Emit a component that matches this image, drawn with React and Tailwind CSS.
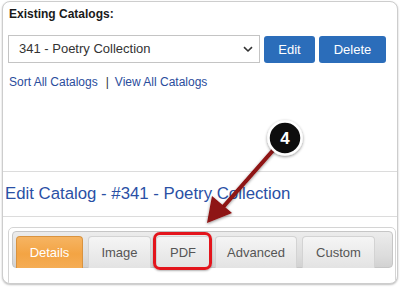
import React from "react";

function Tab({ label, w, active }) {
  return (
    <div
      className={
        "h-[32px] mb-[-1px] flex items-center justify-center rounded-t-[4px] border border-b-0 text-[13px] " +
        (active
          ? "bg-[linear-gradient(#f6b462,#f3a444_55%,#f5ad55)] border-[#d9933f] text-white"
          : "bg-[linear-gradient(#f5f5f5,#ebebeb_55%,#e3e3e3)] border-[#d3d3d3] text-[#555555]")
      }
      style={{ width: w }}
    >
      {label}
    </div>
  );
}

export default function App() {
  return (
    <div
      className="relative w-[401px] h-[287px] bg-white overflow-hidden"
      style={{ fontFamily: '"Liberation Sans", Arial, sans-serif' }}
    >
      <div className="pl-[2px] pt-[1px]">
        <div className="w-[396px] h-[283px] border border-[#cdcdcd] rounded-[8px] overflow-hidden bg-white shadow-[0_1px_2px_rgba(0,0,0,0.25)]">
          <div className="px-[5px] pt-[5px]">
            <div className="ml-[1px] text-[12px] leading-[15px] font-bold text-[#1a1a1a]">
              Existing Catalogs:
            </div>
            <div className="mt-[13px] flex items-start gap-[4px]">
              <div className="w-[252px] h-[28px] border border-[#c4c4c4] bg-white flex items-center justify-between pl-[10px] pr-[6px] text-[13px] text-[#333333]">
                <span>341 - Poetry Collection</span>
                <svg width="10" height="7" viewBox="0 0 10 7">
                  <path d="M1 1.2 L5 5 L9 1.2" fill="none" stroke="#333" strokeWidth="1.6" />
                </svg>
              </div>
              <div className="mt-[1px] w-[51px] h-[27px] rounded-[3px] bg-[#2b6dba] text-white text-[13px] flex items-center justify-center">
                Edit
              </div>
              <div className="mt-[1px] w-[67px] h-[27px] rounded-[3px] bg-[#2b6dba] text-white text-[13px] flex items-center justify-center">
                Delete
              </div>
            </div>
            <div className="mt-[12px] ml-[1px] text-[12px] leading-[14px] text-[#2a4c9c] flex">
              <span>Sort All Catalogs</span>
              <span className="ml-[8px] mr-[6px] text-[#333333]">|</span>
              <span>View All Catalogs</span>
            </div>
          </div>
          <div className="mt-[82px] h-px bg-[#dcdcdc]" />
          <div className="mt-[12px] ml-[2px] text-[16.8px] leading-[19px] text-[#2a50a5]">
            Edit Catalog - #341 - Poetry Collection
          </div>
          <div className="mt-[13px] h-px bg-[#dcdcdc]" />
          <div className="mt-[10px] ml-[5px] w-[388px] h-[70px] border border-[#d4d4d4] rounded-[5px] pt-[3px] pl-[3px] pr-[2px]">
            <div className="h-[37px] border border-[#c6c6c6] rounded-[4px] bg-[linear-gradient(#ececec,#dcdcdc_70%,#d2d2d2)] pl-[3px] flex items-end gap-[5px]">
              <Tab label="Details" w={67} active />
              <Tab label="Image" w={63} />
              <Tab label="PDF" w={54} />
              <Tab label="Advanced" w={82} />
              <Tab label="Custom" w={73} />
            </div>
          </div>
        </div>
      </div>

      <div className="absolute left-[153px] top-[232px] w-[59px] h-[38px] border-[3px] border-[#e3151c] rounded-[7px] shadow-[0_1px_2px_rgba(0,0,0,0.3)]" />

      <svg className="absolute left-0 top-0 pointer-events-none" width="401" height="287" viewBox="0 0 401 287">
        <defs>
          <filter id="sh" x="-50%" y="-50%" width="200%" height="200%">
            <feDropShadow dx="0" dy="1" stdDeviation="1.5" floodColor="#000" floodOpacity="0.45" />
          </filter>
        </defs>
        <g filter="url(#sh)">
          <line x1="276" y1="147" x2="224" y2="206" stroke="#8e1212" strokeWidth="4" strokeLinecap="round" />
          <polygon points="207,223 232,213 212,196" fill="#8e1212" />
        </g>
        <g filter="url(#sh)">
          <circle cx="285" cy="138" r="16.5" fill="#111" stroke="#fff" strokeWidth="2.5" />
        </g>
        <text x="285" y="144" textAnchor="middle" fill="#fff" fontSize="17" fontWeight="bold" fontFamily="Liberation Sans, Arial, sans-serif">
          4
        </text>
      </svg>
    </div>
  );
}
